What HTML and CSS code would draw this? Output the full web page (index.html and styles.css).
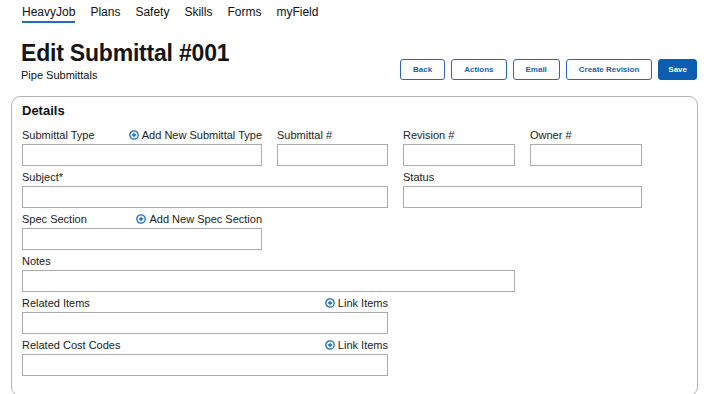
FILE: index.html
```html
<!DOCTYPE html>
<html lang="en">
<head>
    <meta charset="UTF-8">
    <title>Edit Submittal #001</title>
    <link rel="stylesheet" href="styles.css">
</head>
<body>
    <nav class="top-nav">
        <a class="nav-item active">HeavyJob</a>
        <a class="nav-item">Plans</a>
        <a class="nav-item">Safety</a>
        <a class="nav-item">Skills</a>
        <a class="nav-item">Forms</a>
        <a class="nav-item">myField</a>
    </nav>

    <div class="page-header">
        <div class="titles">
            <h1>Edit Submittal #001</h1>
            <div class="subtitle">Pipe Submittals</div>
        </div>
        <div class="actions">
            <button class="btn">Back</button>
            <button class="btn">Actions</button>
            <button class="btn">Email</button>
            <button class="btn">Create Revision</button>
            <button class="btn primary">Save</button>
        </div>
    </div>

    <div class="panel">
        <h2>Details</h2>
        <div class="form-grid">
            <div class="field">
                <div class="label-row"><span>Submittal Type</span><a class="add-link"><svg viewBox="0 0 10 10"><circle cx="5" cy="5" r="4.2"/><path d="M5 2.8v4.4M2.8 5h4.4"/></svg>Add New Submittal Type</a></div>
                <input type="text">
            </div>
            <div class="field">
                <div class="label-row"><span>Submittal #</span></div>
                <input type="text">
            </div>
            <div class="field">
                <div class="label-row"><span>Revision #</span></div>
                <input type="text">
            </div>
            <div class="field">
                <div class="label-row"><span>Owner #</span></div>
                <input type="text">
            </div>

            <div class="field span-2">
                <div class="label-row"><span>Subject*</span></div>
                <input type="text">
            </div>
            <div class="field span-2">
                <div class="label-row"><span>Status</span></div>
                <input type="text">
            </div>

            <div class="field row-start">
                <div class="label-row"><span>Spec Section</span><a class="add-link"><svg viewBox="0 0 10 10"><circle cx="5" cy="5" r="4.2"/><path d="M5 2.8v4.4M2.8 5h4.4"/></svg>Add New Spec Section</a></div>
                <input type="text">
            </div>

            <div class="field span-3 row-start">
                <div class="label-row"><span>Notes</span></div>
                <input type="text">
            </div>

            <div class="field span-2 row-start">
                <div class="label-row"><span>Related Items</span><a class="add-link"><svg viewBox="0 0 10 10"><circle cx="5" cy="5" r="4.2"/><path d="M5 2.8v4.4M2.8 5h4.4"/></svg>Link Items</a></div>
                <input type="text">
            </div>

            <div class="field span-2 row-start">
                <div class="label-row"><span>Related Cost Codes</span><a class="add-link"><svg viewBox="0 0 10 10"><circle cx="5" cy="5" r="4.2"/><path d="M5 2.8v4.4M2.8 5h4.4"/></svg>Link Items</a></div>
                <input type="text">
            </div>
        </div>
    </div>
</body>
</html>
```

FILE: styles.css
```css
body {
    font-family: "Liberation Sans", Arial, sans-serif;
    color: #111;
    background: #fff;
    margin: 0;
    padding: 0;
}
.top-nav {
    display: flex;
    gap: 15px;
    padding: 5px 22px 0;
}
.nav-item {
    font-size: 12px;
    line-height: 14px;
    padding-bottom: 2px;
    border-bottom: 2px solid transparent;
    color: #111;
}
.nav-item.active {
    border-bottom-color: #1f6dc1;
}
.page-header {
    display: flex;
    justify-content: space-between;
    align-items: flex-start;
    padding: 0 12px 0 21px;
    margin-top: 16px;
}
.page-header h1 {
    font-size: 23px;
    line-height: 28px;
    font-weight: bold;
    margin: 0;
    letter-spacing: -0.2px;
    color: #141414;
}
.subtitle {
    font-size: 11px;
    line-height: 14px;
    margin-top: 1px;
}
.actions {
    display: flex;
    gap: 6px;
    margin-top: 20px;
}
.btn {
    font-family: "Liberation Sans", Arial, sans-serif;
    font-size: 8px;
    font-weight: bold;
    height: 21px;
    padding: 0 12px;
    background: #fff;
    color: #1b5fae;
    border: 1px solid #2a67b3;
    border-radius: 3px;
}
.btn.primary {
    background: #0b5db2;
    border-color: #0b5db2;
    color: #fff;
    padding: 0 9px;
}
.panel {
    margin: 14px 11px 0;
    border: 1px solid #b4b4b4;
    border-radius: 9px;
    padding: 6px 10px 17px;
    height: 275px;
}
.panel h2 {
    font-size: 13px;
    line-height: 16px;
    font-weight: bold;
    margin: 0 0 9px;
}
.form-grid {
    display: grid;
    grid-template-columns: 240px 111px 112px 112px;
    column-gap: 15px;
    row-gap: 4px;
}
.field {
    display: flex;
    flex-direction: column;
    gap: 2px;
}
.span-2 { grid-column: span 2; }
.span-3 { grid-column: span 3; }
.row-start { grid-column-start: 1; }
.span-2.row-start { grid-column: 1 / span 2; }
.span-3.row-start { grid-column: 1 / span 3; }
.label-row {
    display: flex;
    justify-content: space-between;
    align-items: center;
    font-size: 11px;
    line-height: 14px;
    color: #222;
}
.add-link {
    display: flex;
    align-items: center;
    gap: 3px;
    color: #222;
}
.add-link svg {
    width: 10px;
    height: 10px;
    fill: none;
    stroke: #1a6dc7;
    stroke-width: 1.3;
}
.field input {
    height: 22px;
    box-sizing: border-box;
    border: 1px solid #ababab;
    border-radius: 0;
    margin: 0;
    padding: 0 6px;
}
```
